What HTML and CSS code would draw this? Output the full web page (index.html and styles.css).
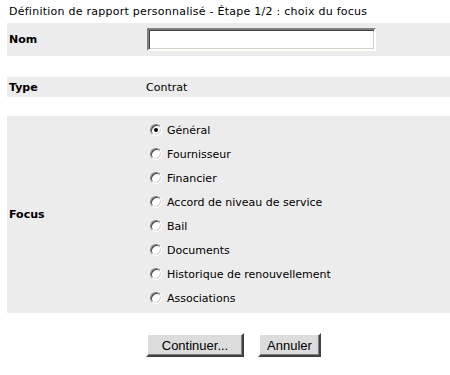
FILE: index.html
```html
<!doctype html>
<html lang="fr">
  <head>
    <meta charset="UTF-8" />
    <title>Définition de rapport personnalisé</title>
    <link rel="stylesheet" href="styles.css">
  </head>
  <body>
    <form class="wizard">
      <h1 class="title">Définition de rapport personnalisé - Étape 1/2 : choix du focus</h1>

      <div class="row row-name">
        <label class="label" for="nom">Nom</label>
        <div class="value"><input type="text" id="nom" class="text-input" /></div>
      </div>

      <div class="row row-type">
        <span class="label">Type</span>
        <span class="value">Contrat</span>
      </div>

      <div class="row row-focus">
        <span class="label">Focus</span>
        <ul class="options">
          <li><label><input type="radio" name="focus" checked /> Général</label></li>
          <li><label><input type="radio" name="focus" /> Fournisseur</label></li>
          <li><label><input type="radio" name="focus" /> Financier</label></li>
          <li><label><input type="radio" name="focus" /> Accord de niveau de service</label></li>
          <li><label><input type="radio" name="focus" /> Bail</label></li>
          <li><label><input type="radio" name="focus" /> Documents</label></li>
          <li><label><input type="radio" name="focus" /> Historique de renouvellement</label></li>
          <li><label><input type="radio" name="focus" /> Associations</label></li>
        </ul>
      </div>

      <div class="actions">
        <button type="button" class="btn btn-continue">Continuer...</button>
        <button type="button" class="btn btn-cancel">Annuler</button>
      </div>
    </form>
  </body>
</html>
```

FILE: styles.css
```css
* {
  margin: 0;
  padding: 0;
  box-sizing: border-box;
}

body {
  font-family: 'DejaVu Sans', Verdana, sans-serif;
  font-size: 11px;
  color: #000;
  background: #fff;
}

.wizard {
  padding: 4px 0 0 7px;
}

.title {
  font-size: 11px;
  font-weight: normal;
  letter-spacing: 0.25px;
  padding-left: 2px;
  height: 19px;
  line-height: 16px;
}

.row {
  display: flex;
  align-items: center;
  background: #ececec;
}

.label {
  width: 139px;
  padding-left: 2px;
  font-weight: bold;
}

.row-name {
  height: 33px;
}

.row-type {
  height: 20px;
  margin-top: 21px;
}

.row-focus {
  margin-top: 19px;
  padding: 2px 0 3px;
}

.text-input {
  display: block;
  width: 229px;
  height: 23px;
  margin-left: 1px;
  border: 2px solid;
  border-color: #808080 #ffffff #ffffff #808080;
  box-shadow: inset 1px 1px 0 #404040, inset -1px -1px 0 #d4d0c8;
  background: #fff;
  font: inherit;
  outline: none;
}

.options {
  list-style: none;
}

.options li {
  height: 24px;
  display: flex;
  align-items: center;
}

.options label {
  display: flex;
  align-items: center;
  gap: 5px;
}

/* radio classique, dessiné à la main */
.options input {
  appearance: none;
  -webkit-appearance: none;
  width: 12px;
  height: 12px;
  margin: 0 0 0 4px;
  border-radius: 50%;
  border: 1px solid;
  border-color: #808080 #ffffff #ffffff #808080;
  box-shadow: inset 1px 1px 0 #404040, inset -1px -1px 0 #d4d0c8;
  background: #fff;
  display: grid;
  place-items: center;
}

.options input:checked::after {
  content: '';
  width: 4px;
  height: 4px;
  border-radius: 50%;
  background: #000;
}

.actions {
  display: flex;
  gap: 14px;
  padding: 20px 0 0 139px;
}

.btn {
  font-family: 'Liberation Sans', Arial, sans-serif;
  font-size: 13px;
  height: 24px;
  background: #dcdcdc;
  border: 2px solid;
  border-color: #ffffff #404040 #404040 #ffffff;
  box-shadow: inset -1px -1px 0 #808080;
  color: #000;
}

.btn-continue {
  width: 98px;
}

.btn-cancel {
  width: 63px;
}
```
